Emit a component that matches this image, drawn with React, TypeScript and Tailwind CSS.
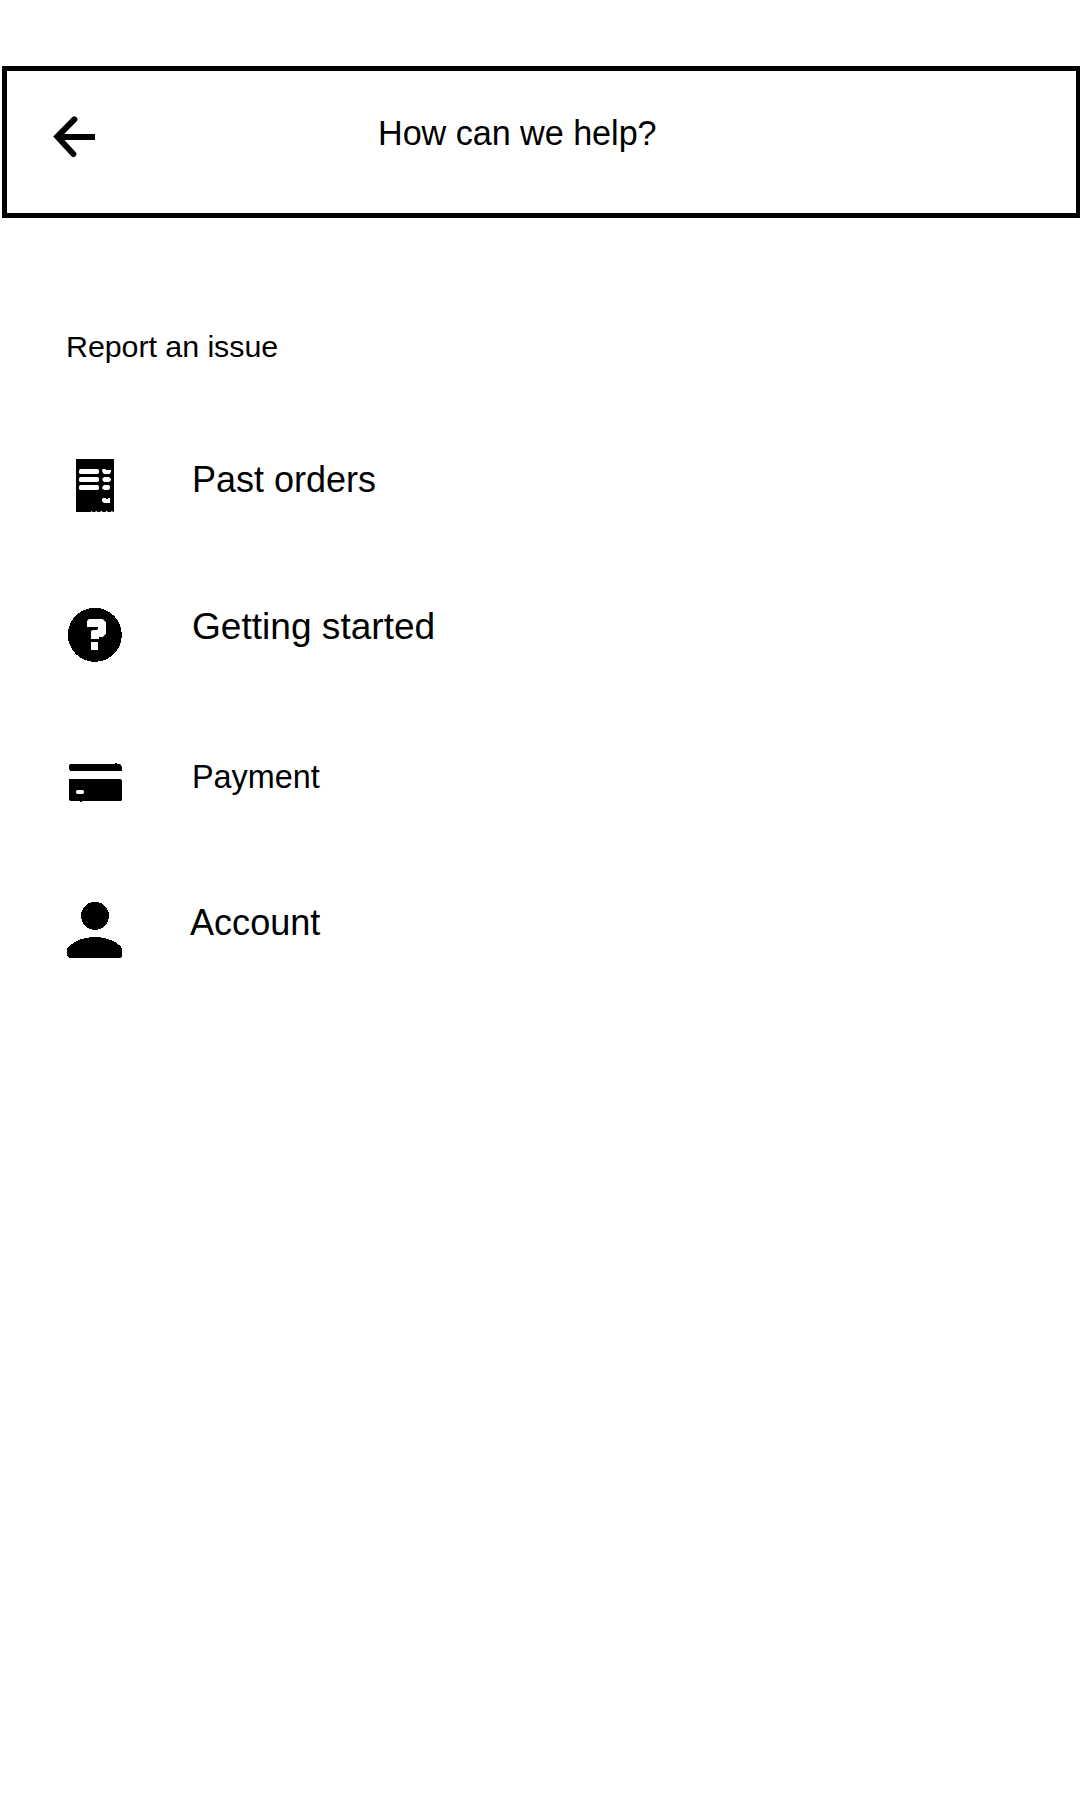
import type { ReactNode } from "react";

function Icon({ children }: { children: ReactNode }) {
  return (
    <svg
      viewBox="0 0 210 210"
      className="h-[70px] w-[70px] shrink-0 fill-black"
      aria-hidden="true"
    >
      {children}
    </svg>
  );
}

function ReceiptIcon() {
  return (
    <Icon>
      <path d="M48 42H162V201H159L156 197L152 201H144L140 197L136 201H128L124 197L120 201H113L109 198L105 201H98L95 198L92 201H48Z" />
      <g className="fill-white">
        <rect x="57" y="72" width="60" height="15" rx="5" />
        <rect x="57" y="96" width="60" height="15" rx="5" />
        <rect x="57" y="120" width="60" height="15" rx="5" />
        <path d="M127 72H135L139 75H153V81L148 87H132L127 81Z" />
        <path d="M132 96H147L153 102V106L147 111H132L127 106V101Z" />
        <path d="M132 120H146L150 124V130L146 135H132L127 130V125Z" />
        <path d="M130 159H138V162H144V159H150V174H132L126 169V163Z" />
      </g>
    </Icon>
  );
}

function HelpIcon() {
  return (
    <Icon>
      <circle cx="104.500" cy="104.500" r="81" shapeRendering="crispEdges" />
      <path
        className="fill-white"
        d="M87 57H128L138 67V101L128 111H117V117H93V93L99 90H110L114 86V81H81V63ZM93 126H114V150H93Z"
      />
    </Icon>
  );
}

function CardIcon() {
  return (
    <Icon>
      <path d="M31 42H165V39H171V42H180L186 50V63H31L27 58V46ZM27 87H183V90H186V150L183 153H66V156H60V153H31L27 149Z" />
      <path className="fill-white" d="M53 120H67L72 123V129L67 132H53L48 129V123Z" />
    </Icon>
  );
}

function PersonIcon() {
  return (
    <Icon>
      <g shapeRendering="crispEdges">
        <circle cx="105" cy="62.500" r="42" />
        <path d="M21 161Q31 148 50 138Q76 126 105 126Q134 126 159 138Q180 149 186 161V185L182 189H27L21 183Z" />
      </g>
    </Icon>
  );
}

const items = [
  { label: "Past orders", icon: <ReceiptIcon />, row: "h-[155px]", text: "ml-[62px] mt-[15px] text-[36px]" },
  { label: "Getting started", icon: <HelpIcon />, row: "h-[150px]", text: "ml-[62px] mt-[6px] text-[37.1px]" },
  { label: "Payment", icon: <CardIcon />, row: "h-[145px]", text: "ml-[62px] mt-[7px] text-[32.4px]" },
  { label: "Account", icon: <PersonIcon />, row: "h-[150px]", text: "ml-[60px] mt-[8px] text-[36.1px]" },
];

export default function App() {
  return (
    <main className="flex h-[1800px] w-[1080px] flex-col overflow-hidden bg-white pt-[66px] font-['Liberation_Sans',Arial,sans-serif] text-black">
      <header className="ml-0.5 flex h-[152px] shrink-0 items-start border-5 border-r-4 border-black">
        <button aria-label="Back" className="ml-[43px] mt-[42px] shrink-0">
          <svg
            viewBox="0 0 132 132"
            className="block h-11 w-11 overflow-visible fill-none stroke-black"
            strokeLinecap="round"
            strokeLinejoin="miter"
          >
            <path d="M73 19L22 71L70 123" strokeWidth="18" />
            <path d="M23 72H135" strokeWidth="18" strokeLinecap="butt" />
            <path className="fill-black" d="M22 71L42 54V90Z" strokeWidth="2" />
          </svg>
        </button>
        <h1 className="ml-[284px] mt-[42px] whitespace-nowrap text-[34.2px] leading-10 tracking-[-0.05px]">
          How can we help?
        </h1>
      </header>
      <section className="pt-[108px]">
        <h2 className="pl-[66px] text-[30.4px] leading-10 tracking-[-0.05px]">Report an issue</h2>
        <ul className="pl-[60px] pt-[79px]">
          {items.map(({ label, icon, row, text }) => (
            <li key={label} className={`flex items-start ${row}`}>
              {icon}
              <span className={`whitespace-nowrap leading-10 ${text}`}>{label}</span>
            </li>
          ))}
        </ul>
      </section>
    </main>
  );
}
